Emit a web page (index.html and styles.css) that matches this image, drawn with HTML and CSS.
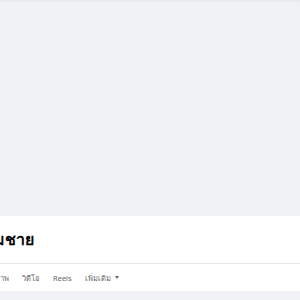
FILE: index.html
```html
<!DOCTYPE html>
<html lang="th">
<head>
  <meta charset="UTF-8" />
  <title>สมชาย | Facebook</title>
  <link rel="stylesheet" href="styles.css">
</head>
<body>
  <div class="cover"></div>
  <div class="profile">
    <div class="head">
      <h1 class="name">สมชาย</h1>
    </div>
    <div class="tabs">
      <a class="tab" href="#">รูปภาพ</a>
      <a class="tab" href="#">วิดีโอ</a>
      <a class="tab" href="#">Reels</a>
      <a class="tab" href="#">เพิ่มเติม <span class="caret"></span></a>
    </div>
  </div>
  <div class="feed"></div>
</body>
</html>
```

FILE: styles.css
```css
body {
  margin: 0;
  font-family: "Noto Sans", "DejaVu Sans", sans-serif;
  background: #f0f2f5;
  color: #050505;
  overflow: hidden;
}
.cover {
  height: 216px;
  box-shadow: inset 0 2px 2px -1px #e2e4e9;
}
.profile {
  background: #fff;
}
.head {
  height: 47px;
  border-bottom: 1px solid #e4e6eb;
  display: flex;
  align-items: center;
}
.name {
  margin: 0 0 0 -16.5px;
  font-size: 16px;
  font-weight: bold;
}
.tabs {
  height: 27px;
  display: flex;
  align-items: center;
  gap: 13px;
  margin-left: -14px;
}
.tab {
  font-size: 7.5px;
  color: #65676b;
  text-decoration: none;
  display: flex;
  align-items: center;
  gap: 4px;
}
.caret {
  width: 0;
  height: 0;
  border-left: 2.5px solid transparent;
  border-right: 2.5px solid transparent;
  border-top: 3px solid #65676b;
}
.feed {
  height: 20px;
}
```
